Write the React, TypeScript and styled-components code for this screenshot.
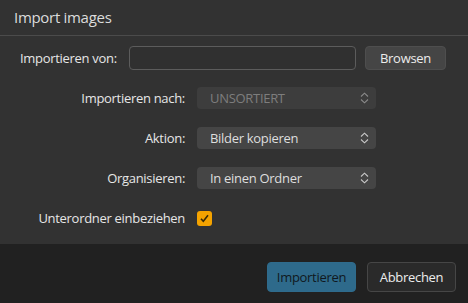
import React from "react";
import styled, { createGlobalStyle } from "styled-components";

const Global = createGlobalStyle`
  html, body { margin: 0; padding: 0; background: #323232; }
  body { font-family: "Open Sans", "Noto Sans", sans-serif; color: #e4e4e4; letter-spacing: -0.3px; }
  * { box-sizing: border-box; }
`;

const Dialog = styled.div`
  width: 468px;
  height: 303px;
  display: flex;
  flex-direction: column;
  background: #323232;
`;

const Header = styled.div`
  height: 36px;
  display: flex;
  align-items: center;
  padding: 0 14px 2px;
  border-bottom: 1px solid #4b4b4b;
  font-size: 15px;
  color: #dcdcdc;
`;

const Body = styled.div`
  flex: 1;
  padding: 10px 0 0;
  display: flex;
  flex-direction: column;
`;

const TopRow = styled.div`
  display: flex;
  align-items: center;
  height: 24px;
  padding: 0 22px 0 20px;
`;

const Label = styled.span`
  font-size: 13px;
  color: #e6e6e6;
  white-space: nowrap;
`;

const TextInput = styled.div`
  flex: 1;
  height: 24px;
  margin: 0 9px 0 12px;
  border: 1px solid #5c5c5c;
  border-radius: 4px;
  background: #303030;
`;

const Button = styled.button<{ $variant?: "primary" | "default" | "plain" }>`
  height: ${(p) => (p.$variant === "plain" ? "24px" : "30px")};
  width: ${(p) => (p.$variant === "plain" ? "81px" : "89px")};
  border-radius: 4px;
  font-family: inherit;
  font-size: 13px;
  letter-spacing: -0.3px;
  padding: 0 0 1px;
  cursor: pointer;
  border: 1px solid
    ${(p) => (p.$variant === "primary" ? "#2f6b8c" : p.$variant === "plain" ? "#4e4e4e" : "#464646")};
  background: ${(p) => (p.$variant === "primary" ? "#2e6a8b" : p.$variant === "plain" ? "#454545" : "#2a2a2a")};
  color: ${(p) => (p.$variant === "primary" ? "#101820" : "#ececec")};
`;

const Grid = styled.div`
  display: grid;
  grid-template-columns: 185px 179px;
  column-gap: 12px;
  row-gap: 18px;
  margin-top: 17px;
  grid-auto-rows: 22px;
  align-items: center;
`;

const GridLabel = styled(Label)`
  justify-self: end;
`;

const Select = styled.div<{ $disabled?: boolean }>`
  height: 22px;
  border-radius: 4px;
  background: ${(p) => (p.$disabled ? "#3d3d3d" : "#454545")};
  display: flex;
  align-items: center;
  justify-content: space-between;
  padding: 0 7px 0 13px;
  font-size: 13px;
  color: ${(p) => (p.$disabled ? "#7d7d7d" : "#dedede")};
`;

const Check = styled.div`
  width: 15px;
  height: 15px;
  border-radius: 3px;
  background: #f4a300;
  display: flex;
  align-items: center;
  justify-content: center;
`;

const Footer = styled.div`
  height: 59px;
  background: #212121;
  display: flex;
  justify-content: flex-end;
  align-items: flex-start;
  gap: 11px;
  padding: 18px 12px 0 0;
`;

const Chevrons = ({ dim }: { dim?: boolean }) => (
  <svg width="9" height="12" viewBox="0 0 9 12" fill="none">
    <path
      d="M1 4.5 L4.5 1.2 L8 4.5 M1 7.5 L4.5 10.8 L8 7.5"
      stroke={dim ? "#8a8a8a" : "#c8c8c8"}
      strokeWidth="1.1"
    />
  </svg>
);

export default function App() {
  return (
    <Dialog>
      <Global />
      <Header>Import images</Header>
      <Body>
        <TopRow>
          <Label>Importieren von:</Label>
          <TextInput />
          <Button $variant="plain">Browsen</Button>
        </TopRow>
        <Grid>
          <GridLabel>Importieren nach:</GridLabel>
          <Select $disabled>
            UNSORTIERT
            <Chevrons dim />
          </Select>
          <GridLabel>Aktion:</GridLabel>
          <Select>
            Bilder kopieren
            <Chevrons />
          </Select>
          <GridLabel>Organisieren:</GridLabel>
          <Select>
            In einen Ordner
            <Chevrons />
          </Select>
          <GridLabel>Unterordner einbeziehen</GridLabel>
          <Check>
            <svg width="11" height="11" viewBox="0 0 11 11" fill="none">
              <path d="M2 5.8 L4.3 8.3 L9 2.2" stroke="#3a2a05" strokeWidth="1.6" />
            </svg>
          </Check>
        </Grid>
      </Body>
      <Footer>
        <Button $variant="primary">Importieren</Button>
        <Button>Abbrechen</Button>
      </Footer>
    </Dialog>
  );
}
